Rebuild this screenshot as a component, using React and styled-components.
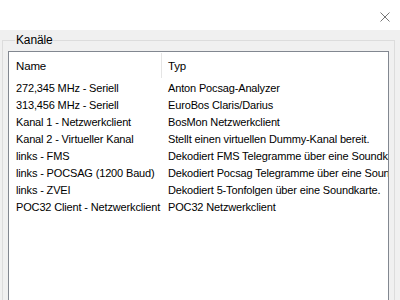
import styled, { createGlobalStyle } from "styled-components"

const GlobalStyle = createGlobalStyle`
  html, body {
    margin: 0;
    padding: 0;
    background: #f0f0f0;
    overflow: hidden;
  }
  body {
    font-family: "Liberation Sans", Arial, sans-serif;
    font-size: 11px;
    letter-spacing: -0.15px;
    color: #000;
  }
`

const StWindow = styled.div`
  width: 400px;
  height: 300px;
  display: flex;
  flex-direction: column;
  overflow: hidden;
`

const StTitleBar = styled.div`
  height: 30px;
  flex: none;
  background: #fff;
  display: flex;
  justify-content: flex-end;
  align-items: flex-start;
`

const StClose = styled.button`
  border: none;
  background: none;
  padding: 0;
  margin: 10px 10px 0 0;
  width: 10px;
  height: 10px;
  display: block;
`

const StBody = styled.div`
  flex: 1;
  padding: 4px 5px 0 2px;
`

const StGroup = styled.fieldset`
  margin: 0;
  padding: 5px 5px 0 5px;
  border: 1px solid #dcdcdc;
  height: 300px;
  box-sizing: border-box;

  legend {
    padding: 0 1px;
    margin-left: 7px;
    font-size: 12px;
    line-height: 12px;
  }
`

const StList = styled.div`
  background: #fff;
  border: 1px solid #828790;
  height: 260px;
  overflow: hidden;
`

const StHeader = styled.div`
  display: grid;
  grid-template-columns: 153px 1fr;
  height: 27px;
`

const StHeadCell = styled.div`
  display: flex;
  align-items: center;
  padding-left: ${p => p.$first ? "7px" : "6px"};
  border-right: ${p => p.$first ? "1px solid #e5e5e5" : "none"};
  margin: 1px 0;
  white-space: nowrap;
  font-size: 11.5px;
`

const StRow = styled.div`
  display: grid;
  grid-template-columns: 153px 1fr;
  height: 17px;
  align-items: center;
`

const StCell = styled.div`
  padding-left: ${p => p.$first ? "7px" : "6px"};
  white-space: nowrap;
  overflow: hidden;
`

const channels = [
  ["272,345 MHz - Seriell", "Anton Pocsag-Analyzer"],
  ["313,456 MHz - Seriell", "EuroBos Claris/Darius"],
  ["Kanal 1 - Netzwerkclient", "BosMon Netzwerkclient"],
  ["Kanal 2 - Virtueller Kanal", "Stellt einen virtuellen Dummy-Kanal bereit."],
  ["links - FMS", "Dekodiert FMS Telegramme über eine Soundkarte."],
  ["links - POCSAG (1200 Baud)", "Dekodiert Pocsag Telegramme über eine Soundkarte."],
  ["links - ZVEI", "Dekodiert 5-Tonfolgen über eine Soundkarte."],
  ["POC32 Client - Netzwerkclient", "POC32 Netzwerkclient"],
]

function App () {
  return (
    <StWindow>
      <GlobalStyle />
      <StTitleBar>
        <StClose aria-label="Schließen">
          <svg width="10" height="10" viewBox="0 0 10 10">
            <path d="M0.5 0.5 L9.5 9.5 M9.5 0.5 L0.5 9.5" stroke="#777" strokeWidth="1" fill="none" />
          </svg>
        </StClose>
      </StTitleBar>
      <StBody>
        <StGroup>
          <legend>Kanäle</legend>
          <StList>
            <StHeader>
              <StHeadCell $first>Name</StHeadCell>
              <StHeadCell>Typ</StHeadCell>
            </StHeader>
            {channels.map(([name, type]) => (
              <StRow key={name}>
                <StCell $first>{name}</StCell>
                <StCell>{type}</StCell>
              </StRow>
            ))}
          </StList>
        </StGroup>
      </StBody>
    </StWindow>
  )
}

export default App
